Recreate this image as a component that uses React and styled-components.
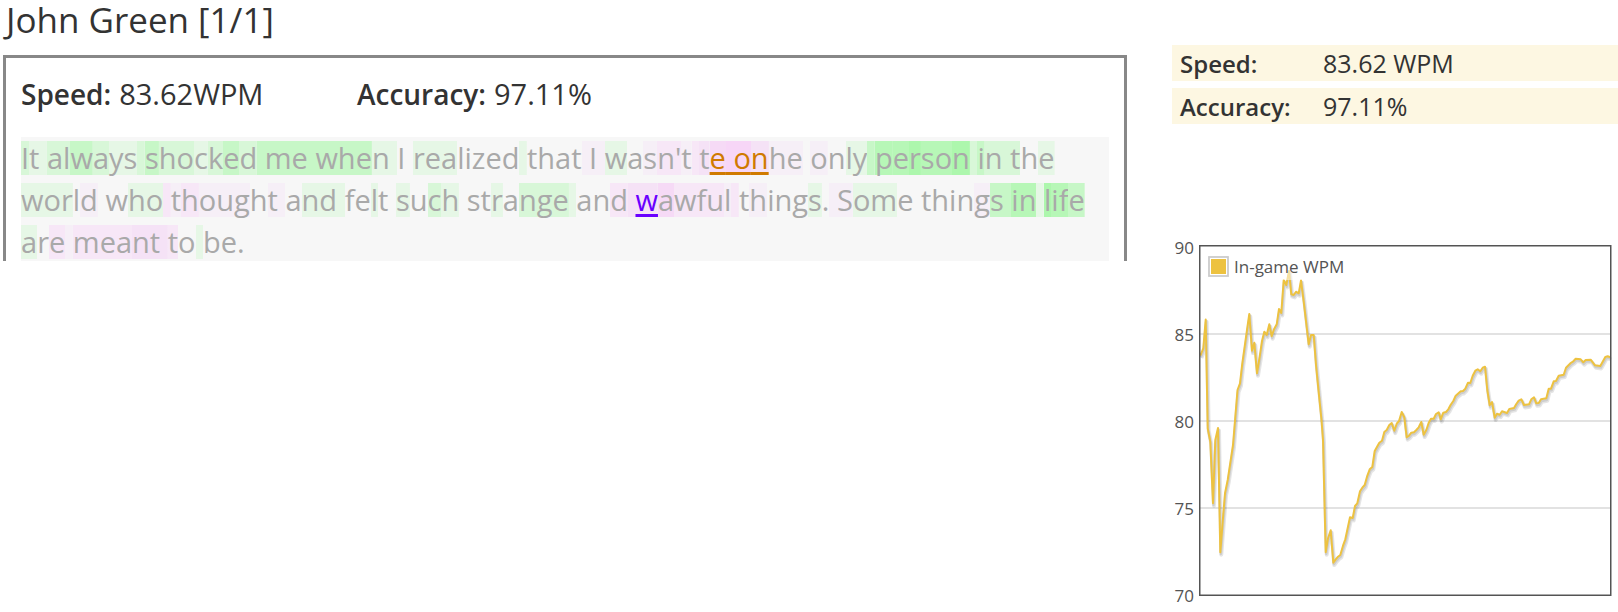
import React from "react";
import styled, { createGlobalStyle, css } from "styled-components";

const GlobalStyle = createGlobalStyle`
  * { box-sizing: border-box; }
  body {
    margin: 0;
    background: #fff;
    color: #333;
    font-family: "Open Sans", "Noto Sans", sans-serif;
  }
`;

const Page = styled.div`
  display: grid;
  grid-template-columns: minmax(0, 1124fr) minmax(0, 446fr);
  column-gap: 45px;
  align-items: start;
  padding-left: 3px;
`;

const Title = styled.h1`
  margin: 0 0 15px;
  padding-left: 3px;
  font-size: 35px;
  font-weight: 400;
  line-height: 40px;
`;

const Panel = styled.section`
  border: 3px solid #888;
  border-bottom: 0;
  padding: 15px 15px 0;
`;

const Label = styled.dt`
  font-weight: 600;
`;

const Value = styled.dd`
  margin: 0;
`;

const Stats = styled.dl`
  display: grid;
  grid-template-columns: 336px 1fr;
  margin: 0 0 22px;
  font-size: 29px;
  line-height: 42px;

  ${Label} {
    font-size: 28px;
  }
`;

const Stat = styled.div`
  display: flex;
  align-items: baseline;
  gap: 8px;
`;

const Passage = styled.p`
  margin: 0;
  max-height: 124px;
  overflow: hidden;
  background: #f7f7f7;
  color: #a9a9a9;
  font-size: 29px;
  line-height: 42px;
`;

const tones = {
  g1: "#e6f7e6",
  g2: "#d8f7d8",
  g3: "#c7f7c7",
  g4: "#b7f7b7",
  g5: "#adf7ad",
  p1: "#f6eff7",
  p2: "#f7e7f7",
  p3: "#f5e2f6",
  p4: "#f6daf6",
  p5: "#f7d6f7",
};

const Run = styled.span`
  ${({ $tone }) =>
    $tone &&
    css`
      background: linear-gradient(${tones[$tone]}, ${tones[$tone]}) center / 100% 34px no-repeat;
    `}
  ${({ $mark }) =>
    $mark &&
    css`
      color: ${$mark};
      text-decoration: underline;
      text-decoration-thickness: 3px;
      text-underline-offset: 3px;
      text-decoration-skip-ink: none;
    `}
`;

const Sidebar = styled.aside`
  padding-top: 45px;
`;

const Summary = styled.dl`
  display: grid;
  gap: 7px;
  margin: 0 0 112px;
  font-size: 25px;
  line-height: 36px;

  ${Label} {
    font-size: 24px;
  }
`;

const SummaryRow = styled.div`
  display: grid;
  grid-template-columns: 143px 1fr;
  align-items: baseline;
  height: 36px;
  padding-left: 8px;
  background: #fdf7e2;
`;

const Chart = styled.svg`
  display: block;
  width: 100%;
  font-size: 17px;
  fill: #545454;
`;

const ORANGE = "#d07a00";
const VIOLET = "#6a00ff";

const runs = [
  ["I", "g2"], ["t ", "g1"], ["al", "g2"], ["w", "g3"], ["a", "g2"], ["ys", "g1"], [" ", "g2"],
  ["s", "g3"], ["ho", "g2"], ["c", "g1"], ["k", "g2"], ["e", "g3"], ["d", "g2"], [" me whe", "g3"],
  ["n ", "g1"], ["I "], ["rea", "g1"], ["lized"], [" ", "g1"], ["that"], [" I ", "p1"], ["w", "g1"],
  ["a"], ["s", "p1"], ["n'", "p2"], ["t", "p1"], [" ", "p2"], ["t", "p3"], ["e", "p4", ORANGE],
  [" o", "p5", ORANGE], ["n", "p3", ORANGE], ["he", "p1"], [" "], ["o", "p1"], ["n"], ["ly", "g1"],
  [" ", "g3"], ["p", "g4"], ["e", "g4"], ["r", "g5"], ["so", "g4"], ["n", "g5"], [" ", "g2"],
  ["i", "g3"], ["n t", "g2"], ["h"], ["e", "g1"], [" "],
  ["wor", "g1"], ["l"], ["d", "p1"], [" w"], ["ho", "g1"], [" ", "p2"], ["t", "p1"], ["h", "p2"],
  ["oug", "p1"], ["h"], ["t ", "p1"], ["a"], ["nd ", "g1"], ["fe"], ["l", "g1"], ["t "], ["s", "g1"],
  ["u"], ["c", "g2"], ["h", "g1"], [" st"], ["r", "g1"], ["a"], ["nge", "g2"], [" ", "g1"], ["an"],
  ["d", "p2"], [" ", "p3"], ["w", "p3", VIOLET], ["a", "p4"], ["wfu", "p2"], ["l", "p1"], [" ", "p2"],
  ["t"], ["h", "p1"], ["ing"], ["s", "g1"], ["."], [" S", "p1"], ["om", "g1"], ["e thin"], ["g", "p1"],
  ["s ", "g3"], ["in", "g4"], [" ", "g1"], ["l", "g5"], ["if", "g4"], ["e", "g3"], [" "],
  ["a", "g1"], ["r"], ["e", "p2"], [" ", "p1"], ["mea", "p2"], ["nt ", "p3"], ["t", "p2"], ["o"],
  [" ", "g1"], ["be."],
];

const trace = `1200.3,355.7 1203.3,348.3 1205.7,319.5 1207.7,428.3 1210.3,441.7 1213,503.3 1215.3,440
1218,428 1220.3,552.3 1222.7,521.7 1225,493.3 1227.7,480 1233,445 1237.5,390 1240,383.3 1242.3,363.3
1247,330 1249.3,314 1252,350.7 1254.3,342.7 1257,373.3 1259.7,356.7 1262,341 1264.3,331.7 1266.7,335
1269.3,324.3 1271.7,336.3 1274,329.3 1276.7,324.3 1279,309 1281.3,313 1283.7,280 1286.3,285 1289,271
1291.3,294.3 1293.7,295 1296,291.7 1298.7,293.3 1301,280.3 1303.7,301.7 1308.7,344.3 1311,335
1313.7,335 1316,365 1318.3,388.3 1321.5,420 1323,440 1325.7,552.3 1328,538.3 1330.7,530.3
1333.3,562.7 1335.7,559.3 1338,556.7 1340.3,555 1343,545.7 1345.3,539.3 1350,517.3 1352.7,518
1355,506 1357.3,503.3 1360,491.3 1362.3,487.7 1364.7,485 1367,476.7 1369.7,469.3 1372.3,467
1374.7,451 1379.3,442.7 1382,440.7 1384.3,432 1386.7,430 1389.3,425 1391.7,423 1394.3,430.7
1396.7,423.7 1399,421 1401.7,412 1404.3,417.3 1406.7,437.3 1409,435.7 1411.3,432.7 1414,432.3
1416.3,430 1418.7,427.3 1421.3,422 1423.7,434.7 1426.3,430 1428.7,422.7 1431,418.7 1433.7,418.7
1436,414 1438.7,412.3 1440.7,419.3 1443.3,412.7 1446,412 1448.3,409.3 1450.7,404.7 1453.3,401
1455.7,395.7 1460.7,391.3 1463,391 1465.3,388.7 1468,382.7 1470.3,383 1472.7,375.7 1475.3,370.7
1477.7,369.3 1480.3,371.3 1482.7,367.7 1485,366.7 1487.3,390 1489.7,405.3 1492,402 1494.7,417.7
1497,413.7 1499.7,414.7 1502,411.3 1507,413 1509.3,409 1514,408 1516.3,404 1518.7,400.7
1521.3,399.3 1524,405 1529,404.3 1531.3,399.3 1534,397.3 1536.3,403.3 1538.7,403 1541,399.3
1546.3,398.3 1548.7,388.7 1551,388.7 1553.7,381.3 1556,381 1558.7,375.7 1563.7,374.7 1566,367.7
1570.7,363 1573.3,361.3 1575.7,358.7 1580.7,359.3 1583.3,362.3 1585.7,360 1590.7,359.7
1595,365.3 1600.3,366 1605.3,357 1607.7,356.3 1610.3,357.3`;

const ticks = [
  [90, 254],
  [85, 341],
  [80, 428],
  [75, 515],
  [70, 602],
];

function SpeedChart() {
  return (
    <Chart viewBox="1172 236 446 370" role="img" aria-label="In-game WPM over the race">
      {ticks.map(([value, y]) => (
        <text key={value} x="1194" y={y} textAnchor="end">
          {value}
        </text>
      ))}
      <path d="M1200 334H1611M1200 421H1611M1200 508H1611" stroke="#545454" strokeOpacity="0.22" strokeWidth="1.6" />
      <g fill="none" strokeLinejoin="round">
        <polyline points={trace} transform="translate(1 2.4)" stroke="#000" strokeOpacity="0.1" strokeWidth="4" />
        <polyline points={trace} transform="translate(0.6 1.6)" stroke="#000" strokeOpacity="0.1" strokeWidth="2.5" />
        <polyline points={trace} stroke="#edc240" strokeWidth="2" />
      </g>
      <rect x="1199.75" y="245.75" width="411" height="349.5" fill="none" stroke="#545454" strokeWidth="1.5" />
      <rect x="1206" y="253" width="142" height="27" fill="#fff" fillOpacity="0.5" />
      <rect x="1209" y="257" width="19" height="19" fill="#fff" stroke="#ccc" strokeWidth="1.8" />
      <rect x="1211" y="259" width="15" height="15" fill="#edc240" />
      <text x="1234" y="273">In-game WPM</text>
    </Chart>
  );
}

export default function App() {
  return (
    <>
      <GlobalStyle />
      <Page>
        <main>
          <Title>John Green [1/1]</Title>
          <Panel>
            <Stats>
              <Stat>
                <Label>Speed:</Label>
                <Value>83.62WPM</Value>
              </Stat>
              <Stat>
                <Label>Accuracy:</Label>
                <Value>97.11%</Value>
              </Stat>
            </Stats>
            <Passage>
              {runs.map(([text, tone, mark], i) => (
                <Run key={i} $tone={tone} $mark={mark}>
                  {text}
                </Run>
              ))}
            </Passage>
          </Panel>
        </main>
        <Sidebar>
          <Summary>
            <SummaryRow>
              <Label>Speed:</Label>
              <Value>83.62 WPM</Value>
            </SummaryRow>
            <SummaryRow>
              <Label>Accuracy:</Label>
              <Value>97.11%</Value>
            </SummaryRow>
          </Summary>
          <SpeedChart />
        </Sidebar>
      </Page>
    </>
  );
}
